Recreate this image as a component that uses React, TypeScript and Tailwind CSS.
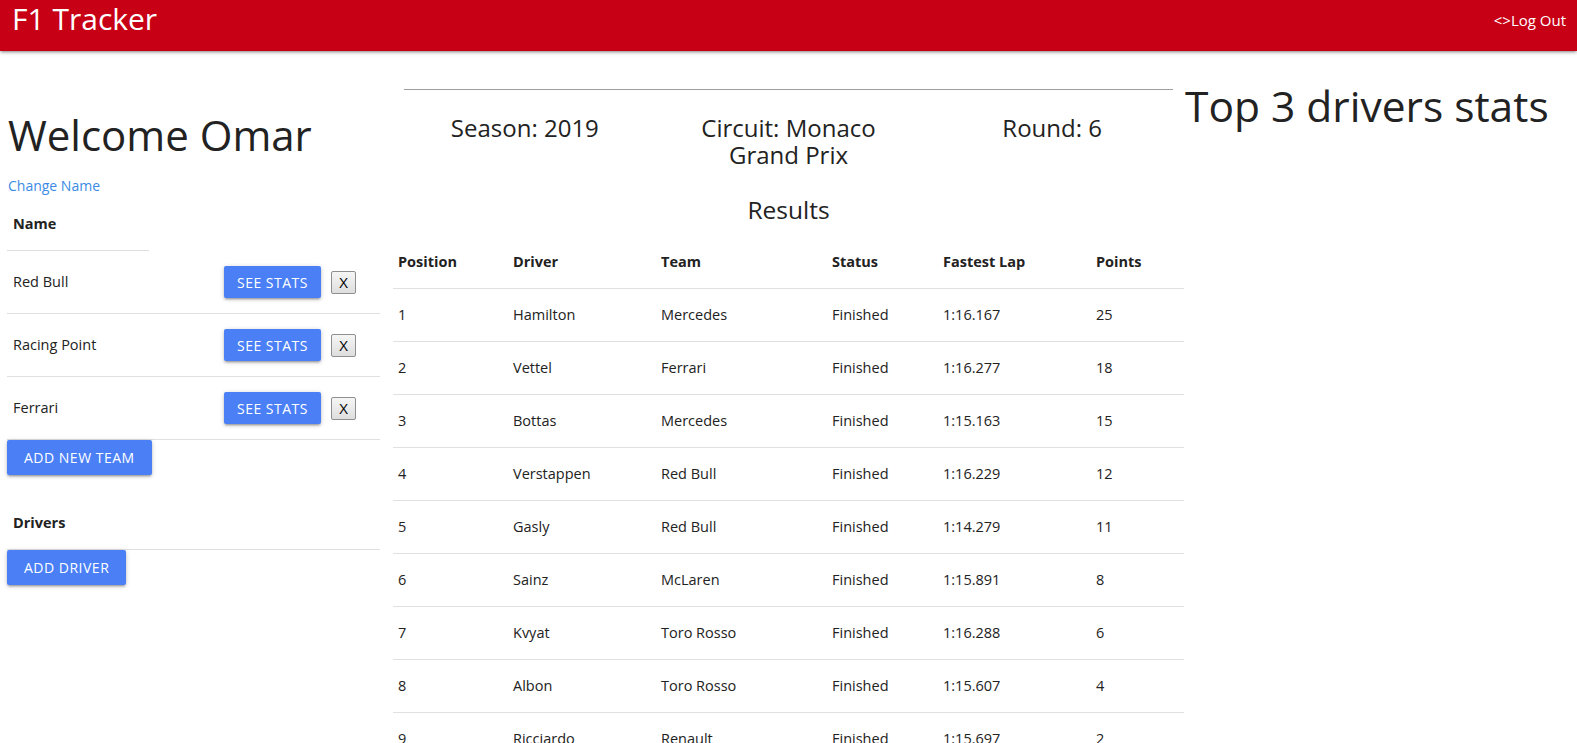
import React from "react";

const teams = ["Red Bull", "Racing Point", "Ferrari"];

const results = [
  ["1", "Hamilton", "Mercedes", "Finished", "1:16.167", "25"],
  ["2", "Vettel", "Ferrari", "Finished", "1:16.277", "18"],
  ["3", "Bottas", "Mercedes", "Finished", "1:15.163", "15"],
  ["4", "Verstappen", "Red Bull", "Finished", "1:16.229", "12"],
  ["5", "Gasly", "Red Bull", "Finished", "1:14.279", "11"],
  ["6", "Sainz", "McLaren", "Finished", "1:15.891", "8"],
  ["7", "Kvyat", "Toro Rosso", "Finished", "1:16.288", "6"],
  ["8", "Albon", "Toro Rosso", "Finished", "1:15.607", "4"],
  ["9", "Ricciardo", "Renault", "Finished", "1:15.697", "2"],
  ["10", "Grosjean", "Haas F1 Team", "Finished", "1:16.032", "1"],
];

const cols = ["w-[115px]", "w-[148px]", "w-[171px]", "w-[111px]", "w-[153px]", "flex-1"];
const headers = ["Position", "Driver", "Team", "Status", "Fastest Lap", "Points"];

const btnShadow =
  "shadow-[0_2px_2px_0_rgba(0,0,0,0.14),0_3px_1px_-2px_rgba(0,0,0,0.12),0_1px_5px_0_rgba(0,0,0,0.2)]";

export default function App() {
  return (
    <div className="h-screen overflow-hidden bg-white text-[#222] font-['Open_Sans',sans-serif]">
      {/* navbar */}
      <nav className="relative z-10 h-[51px] bg-[#c70016] text-white flex items-start justify-between pl-[12px] pr-[11px] shadow-[0_2px_2px_0_rgba(0,0,0,0.14),0_3px_1px_-2px_rgba(0,0,0,0.12),0_1px_5px_0_rgba(0,0,0,0.2)]">
        <span className="text-[30px] leading-[38px]">F1 Tracker</span>
        <span className="text-[15px] leading-[20px] mt-[10px]">&lt;&gt;Log Out</span>
      </nav>

      <div className="flex">
        {/* left column */}
        <div className="w-[393px] shrink-0 pl-[7px] pr-[13px]">
          <h1 className="mt-[59px] pl-[1px] text-[42px] leading-[50px]">Welcome Omar</h1>
          <a className="block mt-[16px] pl-[1px] text-[14px] leading-[20px] text-[#3b8be6]">Change Name</a>

          <div className="mt-[3px] w-[142px] border-b border-[#e0e0e0] px-[6px] pt-[15px] pb-[16px] text-[14.5px] leading-[20px] font-bold">
            Name
          </div>
          {teams.map((t) => (
            <div key={t} className="flex items-center border-b border-[#e0e0e0] pl-[6px] pr-[24px] py-[15px] text-[14.5px]">
              <span className="flex-1">{t}</span>
              <button className={`h-[32px] px-[13px] rounded-[2px] bg-[#4a7ff5] text-white text-[14px] tracking-[0.5px] ${btnShadow}`}>
                SEE STATS
              </button>
              <button className="ml-[10px] w-[25px] h-[23px] rounded-[2px] border border-[#8f8f8f] bg-gradient-to-b from-[#f6f6f6] to-[#dedede] text-[15px] leading-none text-black">
                X
              </button>
            </div>
          ))}
          <button className={`h-[35px] px-[17px] rounded-[2px] bg-[#4a7ff5] text-white text-[14px] tracking-[0.5px] ${btnShadow}`}>
            ADD NEW TEAM
          </button>

          <div className="mt-[23px] border-b border-[#e0e0e0] px-[6px] pt-[15px] pb-[16px] text-[14.5px] leading-[20px] font-bold">
            Drivers
          </div>
          <button className={`h-[35px] px-[17px] rounded-[2px] bg-[#4a7ff5] text-white text-[14px] tracking-[0.5px] ${btnShadow}`}>
            ADD DRIVER
          </button>
        </div>

        {/* center column */}
        <div className="w-[791px] shrink-0">
          <div className="mx-[11px] mt-[38px] border-t border-[#9e9e9e]" />
          <div className="grid grid-cols-3 mt-[24px] text-[24px] leading-[27px] text-center">
            <div className="px-[40px]">Season: 2019</div>
            <div className="px-[40px]">Circuit: Monaco Grand Prix</div>
            <div className="px-[40px]">Round: 6</div>
          </div>
          <div className="mt-[28px] text-center text-[24.5px] leading-[28px]">Results</div>

          <div className="mt-[12px] text-[14.5px] leading-[22px]">
            <div className="flex border-b border-[#e0e0e0] font-bold">
              {headers.map((h, i) => (
                <div key={h} className={`${cols[i]} px-[5px] py-[15px]`}>{h}</div>
              ))}
            </div>
            {results.map((r) => (
              <div key={r[0]} className="flex border-b border-[#e0e0e0]">
                {r.map((c, i) => (
                  <div key={i} className={`${cols[i]} px-[5px] py-[15px]`}>{c}</div>
                ))}
              </div>
            ))}
          </div>
        </div>

        {/* right column */}
        <div className="flex-1 pl-[1px]">
          <h2 className="mt-[30px] text-[42.5px] leading-[50px] whitespace-nowrap">Top 3 drivers stats</h2>
        </div>
      </div>
    </div>
  );
}
